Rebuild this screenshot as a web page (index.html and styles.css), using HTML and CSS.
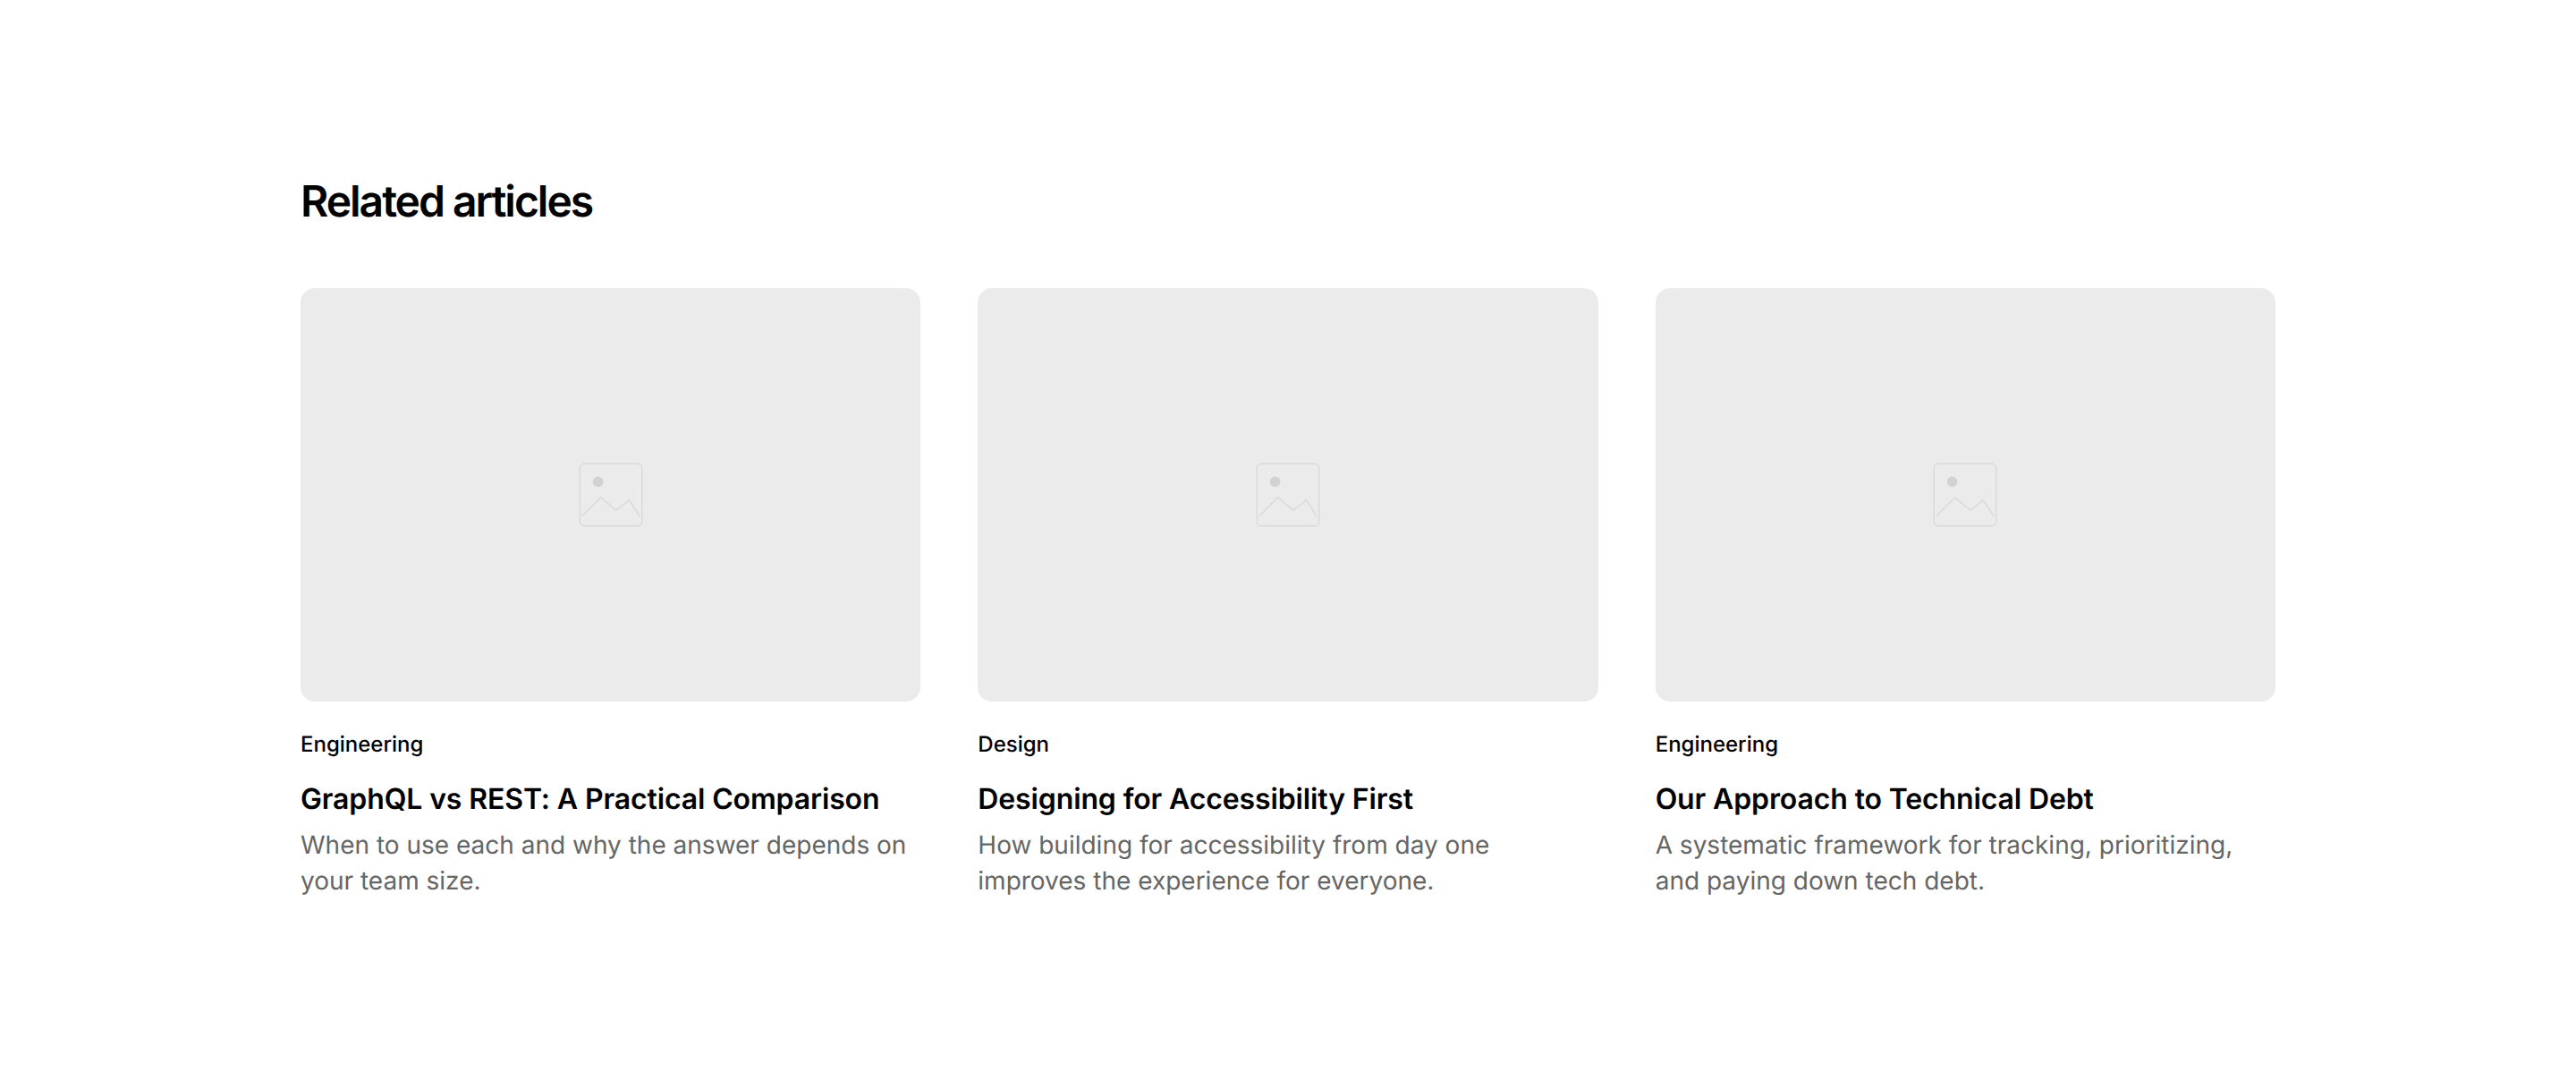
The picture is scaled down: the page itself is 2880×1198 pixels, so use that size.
FILE: index.html
```html
<!DOCTYPE html>
<html lang="en">
<head>
  <meta charset="UTF-8" />
  <meta name="viewport" content="width=device-width, initial-scale=1.0" />
  <title>Related articles</title>
  <link rel="stylesheet" href="styles.css">
</head>
<body>
  <svg width="0" height="0" class="sprite">
    <symbol id="placeholder" viewBox="0 0 72 72">
      <rect x="1.3" y="1.3" width="69.4" height="69.4" rx="4.8" />
      <circle cx="21.6" cy="21.4" r="5.8" />
      <path d="M3.8 59.8 L24.6 39 L42 53.3 L56.3 41.8 L68.3 59.8" />
    </symbol>
  </svg>

  <section class="related">
    <h2>Related articles</h2>
    <div class="grid">
      <article class="card">
        <div class="thumb"><svg class="icon"><use href="#placeholder" /></svg></div>
        <p class="category">Engineering</p>
        <h3>GraphQL vs REST: A Practical Comparison</h3>
        <p class="summary">When to use each and why the answer depends on your team size.</p>
      </article>
      <article class="card">
        <div class="thumb"><svg class="icon"><use href="#placeholder" /></svg></div>
        <p class="category">Design</p>
        <h3>Designing for Accessibility First</h3>
        <p class="summary">How building for accessibility from day one improves the experience for everyone.</p>
      </article>
      <article class="card">
        <div class="thumb"><svg class="icon"><use href="#placeholder" /></svg></div>
        <p class="category">Engineering</p>
        <h3>Our Approach to Technical Debt</h3>
        <p class="summary">A systematic framework for tracking, prioritizing, and paying down tech debt.</p>
      </article>
    </div>
  </section>
</body>
</html>
```
FILE: styles.css
```css
:root {
  --ink: #000;
  --muted: #666;
  --thumb: #ebebeb;
  --line: #d9d9d9;
}

* {
  box-sizing: border-box;
}

body {
  margin: 0;
  background-color: #fff;
  color: var(--ink);
  font-family: Inter, sans-serif;
  text-rendering: geometricPrecision;
  -webkit-font-smoothing: antialiased;
}

h2, h3, p {
  margin: 0;
}

.sprite {
  display: block;
}

.related {
  max-width: 2304px;
  margin: 0 auto;
  padding: 192px 48px;
}

h2 {
  margin-bottom: 65px;
  font-size: 48px;
  font-weight: 600;
  line-height: 65px;
  letter-spacing: -0.042em;
}

.grid {
  display: grid;
  grid-template-columns: repeat(3, 1fr);
  gap: 64px;
}

.thumb {
  display: flex;
  align-items: center;
  justify-content: center;
  aspect-ratio: 3 / 2;
  border-radius: 16px;
  background-color: var(--thumb);
}

.icon {
  width: 72px;
  height: 72px;
  fill: none;
  stroke: var(--line);
  stroke-width: 1.4;
}

#placeholder circle {
  fill: #d2d2d2;
  stroke: none;
}

.category {
  margin-top: 31px;
  font-size: 24px;
  font-weight: 500;
  line-height: 33px;
}

h3 {
  margin-top: 24px;
  font-size: 32px;
  font-weight: 600;
  line-height: 41px;
  letter-spacing: -0.004em;
}

.summary {
  margin-top: 11px;
  color: var(--muted);
  font-size: 28px;
  line-height: 40px;
}
```
